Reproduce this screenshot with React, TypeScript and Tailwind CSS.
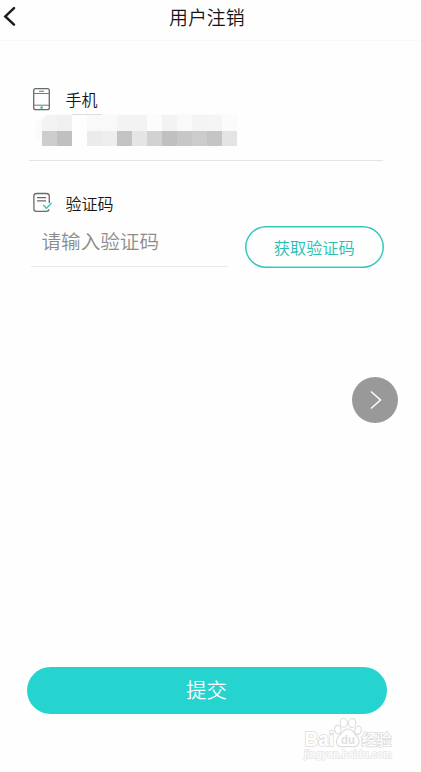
const topRow = ['#f3f3f3', '#f0f0f0', '#fefefe', '#f9f9f9', '#f9f9f9', '#f3f3f3', '#f3f3f3', '#fcfcfc', '#f3f3f3', '#f9f9f9', '#f4f4f4', '#f5f5f5', '#fbfbfb'];
const bottomRow = ['#cdcdcd', '#c0c0c0', '#fefefe', '#ebebeb', '#eeeeee', '#c3c3c3', '#e5e5e5', '#d2d2d2', '#c0c0c0', '#c7c7c7', '#cccccc', '#c5c5c5', '#e4e4e4'];

function MaskedNumber() {
  return (
    <div className="ml-[35px] flex w-[202px] flex-col rounded-l-2xl bg-[#fbfbfb] pl-[7px]">
      <div className="ml-[30px] h-px w-[30px] bg-[#dedede]" />
      {[topRow, bottomRow].map((row, i) => (
        <div key={i} className={i === 0 ? 'flex overflow-hidden rounded-tl-lg' : 'flex'}>
          {row.map((color, j) => (
            <div key={j} className={i === 0 ? 'h-4 w-[15px]' : 'h-[15px] w-[15px]'} style={{ backgroundColor: color }} />
          ))}
        </div>
      ))}
    </div>
  );
}

function PhoneIcon() {
  return (
    <svg className="h-6 w-5" viewBox="0 0 20 24" fill="none">
      <rect x="1.7" y="1.7" width="15.6" height="21" rx="2" stroke="#6a6a6a" strokeWidth="1.3" />
      <path d="M2 6.5H17M2 18.2H17" stroke="#777" strokeWidth="1" />
      <path d="M7 4.3H12" stroke="#2bbfac" strokeWidth="1.3" />
      <circle cx="9.6" cy="20.6" r="1.3" fill="#2bbfac" />
    </svg>
  );
}

function CodeIcon() {
  return (
    <svg className="h-6 w-5" viewBox="0 0 20 24" fill="none">
      <path d="M17.3 12V5A2.8 2.8 0 0 0 14.5 2.5H4.5A2.6 2.6 0 0 0 1.9 5.1V17.7A2.6 2.6 0 0 0 4.5 20.3H14.3Q16.7 20.3 17.1 18.3" stroke="#6a6a6a" strokeWidth="1.3" />
      <path d="M5 6.6H14M5 9.9H14" stroke="#6a6a6a" strokeWidth="1.2" />
      <path d="M11.3 14L14.5 17.2L19.6 12" stroke="#2ec9b5" strokeWidth="1.4" />
    </svg>
  );
}

function Watermark() {
  return (
    <svg className="absolute left-[300px] top-[714px] h-[50px] w-[100px]" viewBox="0 0 100 50" fill="#fff" stroke="#dcdcdc" strokeWidth="1.1">
      <ellipse cx="37.8" cy="15.5" rx="3.2" ry="4.3" transform="rotate(-15 37.8 15.5)" />
      <ellipse cx="43.8" cy="8.8" rx="3.6" ry="4.5" />
      <ellipse cx="52.2" cy="9" rx="3.6" ry="4.5" transform="rotate(12 52.2 9)" />
      <ellipse cx="58" cy="16.2" rx="3.2" ry="4.3" transform="rotate(15 58 16.2)" />
      <path d="M48 15C44 15 43 18 40.5 20.5C37.5 23 36 25 36.5 29C38 34 43 32.5 48 32.5S57 34 59 29C59.5 25 57.5 22.5 55 20C52.5 17 52 15 48 15Z" />
      <g className="font-['Liberation_Sans',sans-serif] font-bold" paintOrder="stroke">
        <text x="4.5" y="32" fontSize="20" strokeWidth="1.6" textLength="29.5" lengthAdjust="spacingAndGlyphs">Bai</text>
        <text x="41" y="30" fontSize="12" fill="#dfdfdf" stroke="none" textLength="14" lengthAdjust="spacingAndGlyphs">du</text>
        <text x="4" y="44" fontSize="10" fill="#fcfcfc" stroke="#e6e6e6" strokeWidth="1.3" textLength="88" lengthAdjust="spacingAndGlyphs">jingyan.baidu.com</text>
      </g>
      <text x="61.5" y="30.5" fontSize="15" strokeWidth="1.6" textLength="30" lengthAdjust="spacingAndGlyphs" paintOrder="stroke" className="font-['Noto_Sans_CJK_SC',sans-serif] font-medium">经验</text>
    </svg>
  );
}

export default function App() {
  return (
    <div className="relative flex h-[772px] w-[421px] flex-col overflow-hidden bg-[#fefefe] font-['Noto_Sans_CJK_SC',sans-serif] font-[350] text-[#151515]">
      <header className="flex h-[41px] shrink-0 items-start border-b border-[#f9f9f9]">
        <button aria-label="返回" className="mt-[6px] h-[21px] w-5">
          <svg className="h-[21px] w-5" viewBox="0 0 20 21" fill="none">
            <path d="M14 2.2L5.3 10.4L14 18.6" stroke="#1c1c1c" strokeWidth="2.5" strokeLinecap="round" />
          </svg>
        </button>
        <h1 className="ml-[149px] mt-[3px] text-[18.9px] font-[350] leading-[28px]">用户注销</h1>
      </header>

      <section className="flex h-[120px] flex-col pt-[46px]">
        <div className="ml-8 flex h-[27px] items-start">
          <PhoneIcon />
          <span className="ml-[13.5px] text-base leading-6">手机</span>
        </div>
        <MaskedNumber />
        <div className="ml-[29px] mt-auto h-px w-[354px] shrink-0 bg-[#e4e4e4]" />
      </section>

      <section className="flex flex-col pt-[30px]">
        <div className="ml-8 flex h-[35px] items-start">
          <CodeIcon />
          <span className="ml-[13.5px] text-base leading-6">验证码</span>
        </div>
        <div className="flex">
          <div className="ml-[31px] h-[41px] w-[197px] border-b border-[#e9e9e9] pl-[10.5px]">
            <span className="text-[19.6px] leading-[30px] text-[#8c8c8c]">请输入验证码</span>
          </div>
          <button className="ml-[17px] h-[42px] w-[138.5px] rounded-full text-[16.2px] leading-[40px] text-[#26bfb2] shadow-[inset_0_0_0_1.5px_#35c9bd]">获取验证码</button>
        </div>
      </section>

      <button aria-label="下一页" className="ml-[352px] mt-[109px] h-[46px] w-[46px] rounded-full bg-[#999]">
        <svg className="h-[46px] w-[46px]" viewBox="0 0 46 46" fill="none">
          <path d="M19 14.5L28.5 23L19 31.5" stroke="#fff" strokeWidth="1.5" />
        </svg>
      </button>

      <button className="ml-[26.5px] mt-[244px] h-[47px] w-[360px] rounded-full bg-[#25d3cf] pb-[3px] text-[20.5px] leading-[42px] text-white">提交</button>
      <Watermark />
    </div>
  );
}
